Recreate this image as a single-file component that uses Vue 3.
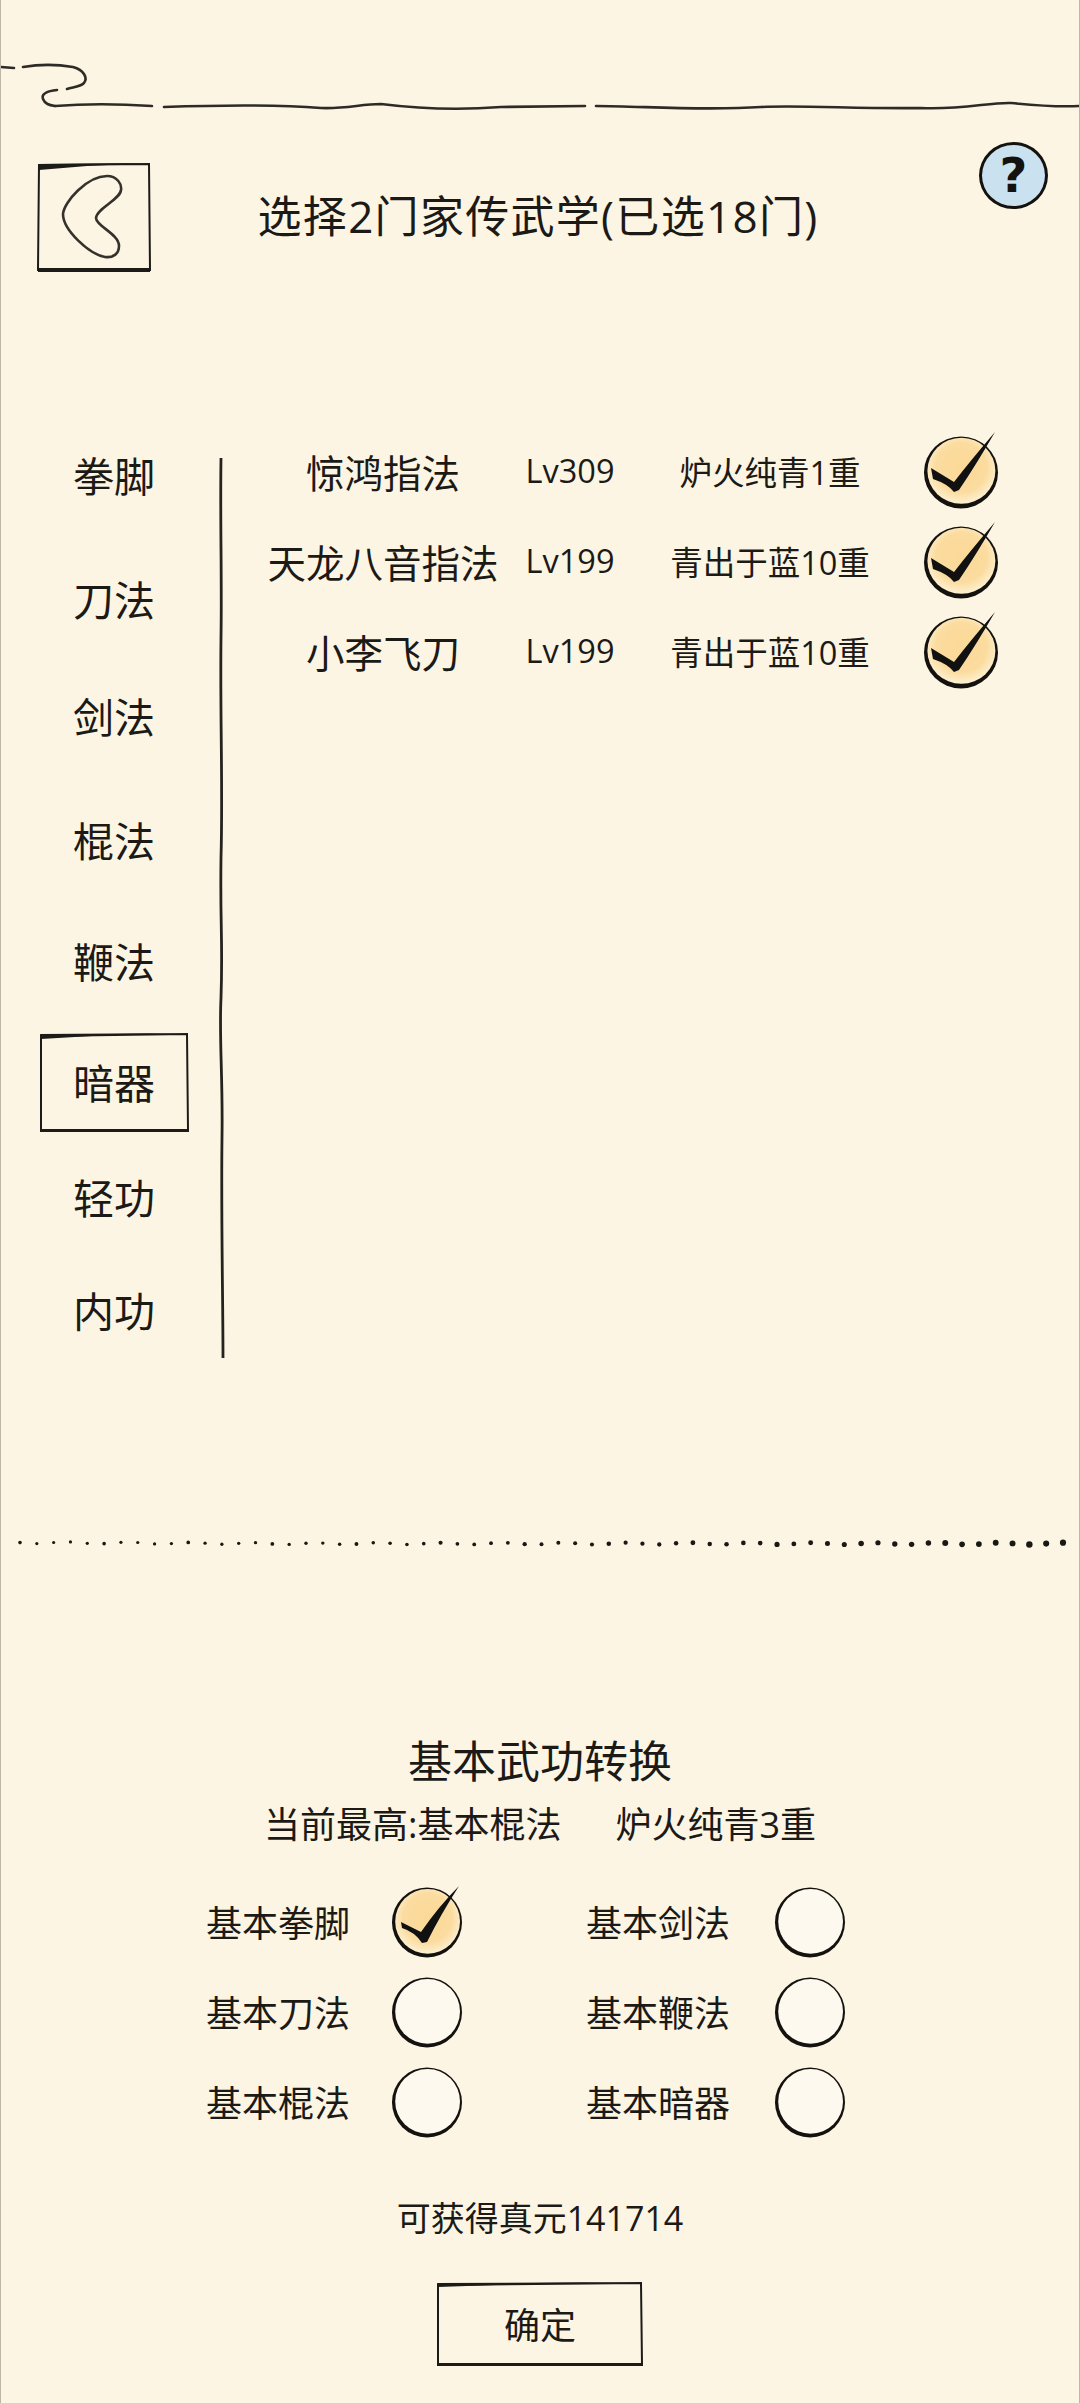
<script setup>
import { computed } from 'vue'

const categories = [
  { name: '拳脚', gap: 0 },
  { name: '刀法', gap: 25 },
  { name: '剑法', gap: 18 },
  { name: '棍法', gap: 25 },
  { name: '鞭法', gap: 22 },
  { name: '暗器', gap: 22, active: true },
  { name: '轻功', gap: 16 },
  { name: '内功', gap: 14 }
]

const skills = [
  { name: '惊鸿指法', level: 'Lv309', rank: '炉火纯青1重' },
  { name: '天龙八音指法', level: 'Lv199', rank: '青出于蓝10重' },
  { name: '小李飞刀', level: 'Lv199', rank: '青出于蓝10重' }
]

const basics = [
  { name: '基本拳脚', checked: true },
  { name: '基本剑法' },
  { name: '基本刀法' },
  { name: '基本鞭法' },
  { name: '基本棍法' },
  { name: '基本暗器' }
]

// dotted divider, the dots get a bit heavier towards the right
const dots = computed(() => {
  const out = []
  for (let i = 0; i < 63; i++) {
    const t = i / 62
    out.push({
      x: 19 + t * 1043,
      y: 8 + Math.sin(i * 1.7) * 0.9 + (t < 0.3 ? t * 4 - 0.4 : 0.6),
      r: 1.6 + t * t * 1.5 + (i % 5 === 0 ? 0.2 : 0)
    })
  }
  return out
})
</script>

<template>
  <div class="page">
    <svg class="defs" width="0" height="0">
      <defs>
        <radialGradient id="tickFill" cx="50%" cy="45%" r="55%">
          <stop offset="0%" stop-color="#fbd998" />
          <stop offset="68%" stop-color="#fbdc9f" />
          <stop offset="100%" stop-color="#fdf0d2" />
        </radialGradient>
      </defs>
    </svg>

    <svg class="top-rule" width="1078" height="80" viewBox="0 0 1078 80">
      <g fill="none" stroke="#2e2b26" stroke-width="2.6" stroke-linecap="round">
        <path d="M0 17 L13 18" />
        <path d="M22 17 C40 14 60 15 72 17 C83 20 87 28 83 33 C79 37 72 37 66 39" />
        <path d="M56 40 C46 41 40 44 42 49 C44 54 48 55 54 56" />
        <path d="M54 56 C80 54 120 54 151 56" />
        <path d="M163 57 C220 55 270 54 320 58 C345 59 360 54 380 54 C420 59 460 60 500 57 L584 56" />
        <path d="M595 56 C640 56 700 61 760 57 C800 55 860 59 920 58 C960 60 990 52 1010 53 C1030 55 1060 57 1078 56" />
      </g>
    </svg>

    <header class="head">
      <button class="back">
        <svg width="114" height="110" viewBox="0 0 114 110">
          <path d="M2 3 L112 2 L113 108 L1 108 Z" fill="none" stroke="#1d1b18" stroke-width="2" />
          <path d="M1 2 L112 1 L50 4 L2 8 Z" fill="#1d1b18" />
          <path d="M1 106 H113 V110 H1 Z" fill="#1d1b18" />
          <path d="M26 52 C27 40 50 14 70 14 C80 14 85 22 84 28 C83 38 60 46 59 56 C59 64 82 72 82 84 C82 92 76 96 68 95 C52 92 26 68 26 52 Z" fill="none" stroke="#35322d" stroke-width="2.6" />
        </svg>
      </button>
      <h1 class="title">选择2门家传武学(已选18门)</h1>
      <span class="help">?</span>
    </header>

    <main class="main">
      <nav class="side">
        <div
          v-for="c in categories"
          :key="c.name"
          class="side-item"
          :style="{ marginTop: c.gap + 'px' }"
        >
          <svg v-if="c.active" class="side-box" width="150" height="101" viewBox="0 0 150 101">
            <path d="M2 4 L148 2 L149 98 L2 98 Z" fill="none" stroke="#1d1b18" stroke-width="2" />
            <path d="M1 2 L148 1 L70 3 L2 7 Z" fill="#1d1b18" />
            <path d="M1 97 H150 V100 H1 Z" fill="#1d1b18" />
          </svg>
          <span class="side-label">{{ c.name }}</span>
        </div>
      </nav>

      <svg class="rule" width="8" height="900" viewBox="0 0 8 900">
        <path d="M3 0 C2 60 4 120 3 180 C2 260 5 330 3 400 C2 470 5 480 3 540 C1 580 5 620 4 680 C3 760 5 840 5 900" fill="none" stroke="#26231f" stroke-width="2.8" />
      </svg>

      <ul class="skills">
        <li v-for="s in skills" :key="s.name" class="skill">
          <span class="skill-name">{{ s.name }}</span>
          <span class="skill-level">{{ s.level }}</span>
          <span class="skill-rank">{{ s.rank }}</span>
          <svg class="tick" width="80" height="80" viewBox="0 0 80 80">
            <ellipse cx="40" cy="42.4" rx="37" ry="36" fill="#14120f" />
            <ellipse cx="40.4" cy="40.8" rx="34" ry="33" fill="url(#tickFill)" />
            <path d="M10 38 L33 52 Q50 30 74 2 Q55 35 38 60 L33 62 Q27 54 12 49 Z" fill="#111" />
          </svg>
        </li>
      </ul>
    </main>

    <svg class="dots" width="1078" height="16" viewBox="0 0 1078 16">
      <circle v-for="(d, i) in dots" :key="i" :cx="d.x" :cy="d.y" :r="d.r" fill="#1a1814" />
    </svg>

    <section class="convert">
      <h2 class="convert-title">基本武功转换</h2>
      <p class="convert-sub">
        <span>当前最高:基本棍法</span>
        <span>炉火纯青3重</span>
      </p>
      <div class="basics">
        <div v-for="b in basics" :key="b.name" class="basic">
          <span class="basic-name">{{ b.name }}</span>
          <svg width="72" height="72" viewBox="0 0 72 72">
            <ellipse cx="36" cy="36.4" rx="35" ry="35" fill="#14120f" />
            <ellipse
              cx="36.6"
              cy="35.4"
              rx="32.4"
              ry="32.4"
              :fill="b.checked ? 'url(#tickFill)' : '#fdf9ef'"
            />
            <path v-if="b.checked" d="M10 36 L30 46 Q48 20 68 0 Q50 28 36 56 L31 57 Q24 46 11 42 Z" fill="#111" />
          </svg>
        </div>
      </div>
      <p class="gain">可获得真元141714</p>
      <button class="ok">
        <svg class="ok-box" width="208" height="86" viewBox="0 0 208 86">
          <path d="M2 4 L205 2 L206 83 L2 83 Z" fill="none" stroke="#1d1b18" stroke-width="2" />
          <path d="M1 2 L205 1 L90 3 L2 6 Z" fill="#1d1b18" />
          <path d="M1 82 H207 V85 H1 Z" fill="#1d1b18" />
        </svg>
        确定
      </button>
    </section>
  </div>
</template>

<style>
html, body {
  margin: 0;
  background: #fdf5e3;
}
</style>

<style scoped>
.page {
  position: relative;
  width: 1080px;
  height: 2403px;
  box-sizing: border-box;
  overflow: hidden;
  border-left: 1px solid #bdb6a4;
  border-right: 1px solid #bdb6a4;
  background: #fdf5e3;
  color: #1c1a17;
  font-family: "Open Sans", "Noto Sans CJK SC", sans-serif;
}
.defs {
  position: absolute;
}
.top-rule {
  display: block;
  margin-top: 50px;
}
.head {
  display: flex;
  align-items: center;
  height: 110px;
  margin-top: 32px;
  padding: 0 31px 0 36px;
}
.back {
  flex: none;
  width: 114px;
  height: 110px;
  padding: 0;
  border: none;
  background: none;
}
.back svg {
  display: block;
}
.title {
  flex: 1;
  margin: 0;
  padding: 0 54px 3px 0;
  text-align: center;
  font-size: 44px;
  font-weight: 400;
  letter-spacing: 1.3px;
  line-height: 60px;
}
.help {
  flex: none;
  align-self: flex-start;
  width: 69px;
  height: 67px;
  margin-top: -20px;
  box-sizing: border-box;
  border: 3px solid #14120f;
  border-radius: 50%;
  background: #cae1ef;
  text-align: center;
  font-family: "DejaVu Sans", sans-serif;
  font-size: 48px;
  font-weight: 700;
  line-height: 60px;
  color: #14120f;
}
.main {
  display: flex;
  align-items: flex-start;
  margin-top: 154px;
}
.side {
  flex: none;
  width: 217px;
  padding-left: 39px;
  box-sizing: border-box;
}
.side-item {
  position: relative;
  display: flex;
  align-items: center;
  justify-content: center;
  width: 148px;
  height: 99px;
  font-size: 41px;
}
.side-label {
  padding-bottom: 3px;
}
.side-box {
  position: absolute;
  left: -1px;
  top: -1px;
}
.rule {
  flex: none;
  margin-top: 32px;
}
.skills {
  flex: 1;
  margin: 0;
  padding: 2px 0 0 19px;
  list-style: none;
}
.skill {
  display: grid;
  grid-template-columns: 276px 98px 302px 80px;
  align-items: center;
  height: 90px;
  text-align: center;
}
.skill-name {
  padding-bottom: 5px;
  font-size: 38.5px;
}
.skill-level,
.skill-rank {
  padding-bottom: 5px;
  font-size: 32.5px;
}
.tick {
  display: block;
  margin-top: -6px;
}
.dots {
  display: block;
  margin-top: 175px;
}
.convert-title {
  margin: 180px 0 0;
  text-align: center;
  font-size: 44px;
  font-weight: 400;
  line-height: 60px;
}
.convert-sub {
  display: flex;
  justify-content: center;
  gap: 54px;
  margin: 9px 0 0;
  font-size: 36px;
  line-height: 50px;
}
.basics {
  display: grid;
  grid-template-columns: 383px 383px;
  grid-auto-rows: 90px;
  margin-top: 27px;
  padding-left: 205px;
}
.basic {
  display: flex;
  align-items: center;
}
.basic-name {
  width: 185px;
  padding-bottom: 2px;
  font-size: 36px;
}
.basic:nth-child(even) .basic-name {
  width: 188px;
  margin-left: -3px;
}
.gain {
  margin: 46px 0 0;
  text-align: center;
  font-size: 34px;
  line-height: 50px;
}
.ok {
  position: relative;
  display: block;
  width: 208px;
  height: 86px;
  margin: 38px auto 0;
  padding: 0 0 2px;
  border: none;
  background: none;
  color: inherit;
  font-family: inherit;
  font-size: 36px;
}
.ok-box {
  position: absolute;
  left: 0;
  top: 0;
}
</style>
